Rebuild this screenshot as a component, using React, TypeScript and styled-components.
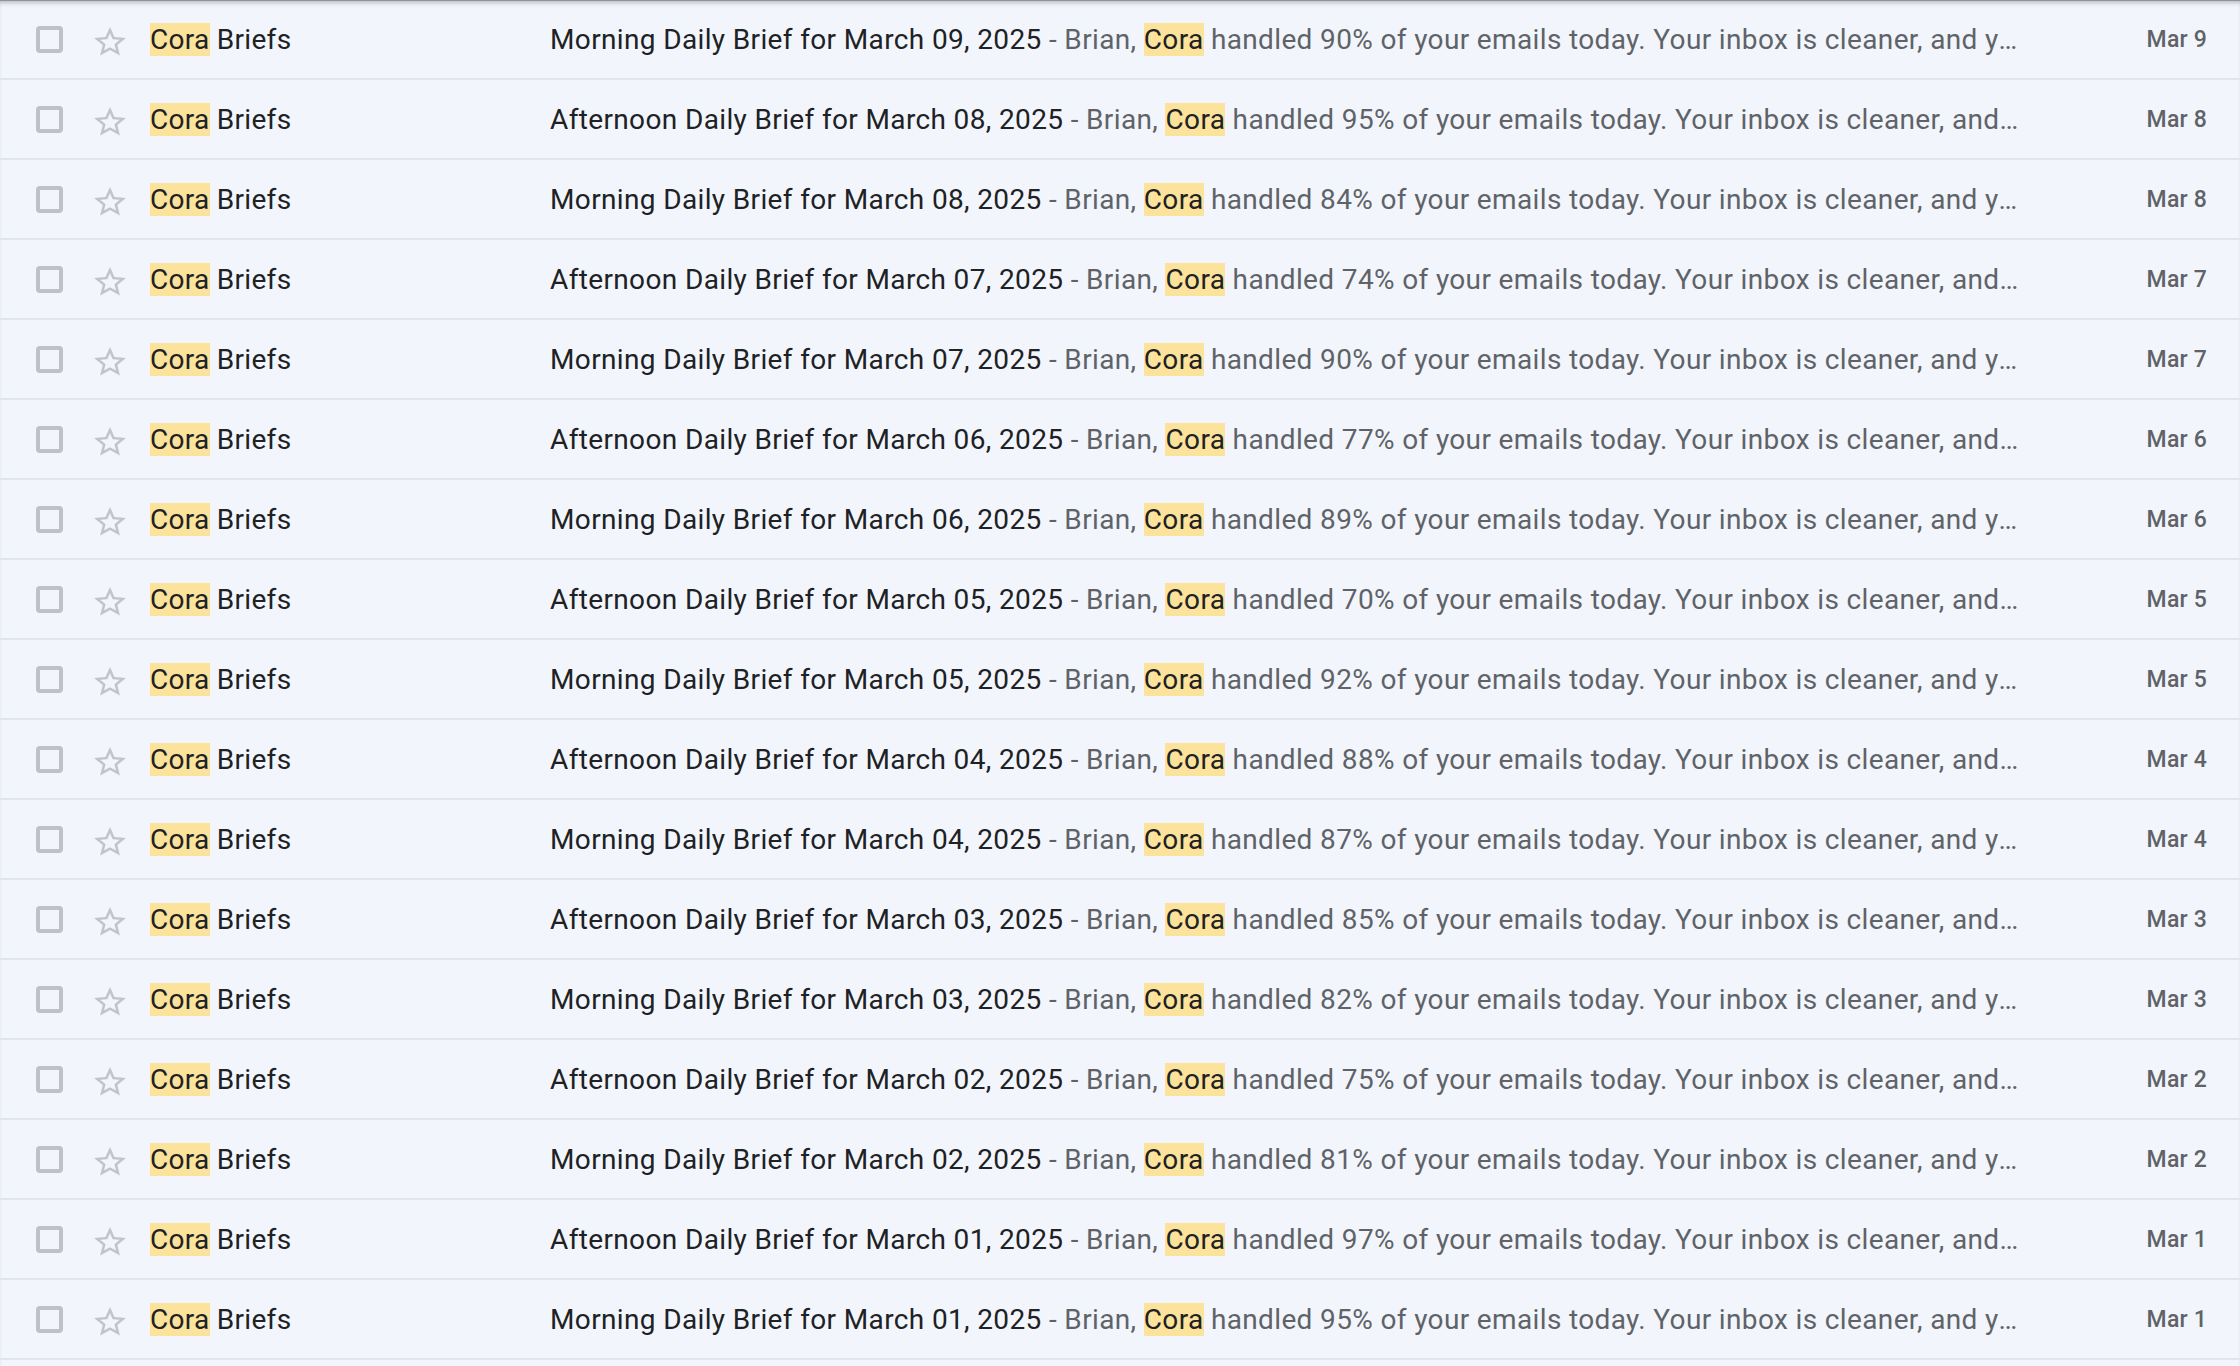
import React from "react";
import styled, { createGlobalStyle } from "styled-components";

const GlobalStyle = createGlobalStyle`
  html, body {
    margin: 0;
    padding: 0;
    background: #f2f6fc;
  }
  body {
    font-family: Roboto, "Liberation Sans", Arial, sans-serif;
    -webkit-font-smoothing: antialiased;
  }
`;

const List = styled.div`
  width: 2240px;
  min-height: 1366px;
  background: #f2f6fc;
  box-shadow: inset 0 1px 0 rgba(95, 99, 104, 0.5), inset 0 5px 4px -2px rgba(60, 64, 67, 0.3);
`;

const Row = styled.div`
  display: flex;
  align-items: center;
  height: 78px;
  border-bottom: 2px solid #e1e6ee;
  padding: 0 33px 0 36px;
  font-size: 28px;
  letter-spacing: 0.3px;
  color: #202124;
`;

const CheckBox = styled.span`
  flex: none;
  box-sizing: border-box;
  width: 27px;
  height: 27px;
  border: 4px solid #bec1c6;
  border-radius: 4px;
  margin-top: 1px;
`;

const StarIcon = styled.svg`
  flex: none;
  width: 32px;
  height: 29px;
  margin-left: 31px;
  margin-top: 5px;
  fill: #c1c4c9;
`;

const Sender = styled.div`
  flex: none;
  width: 400px;
  margin-left: 24px;
  white-space: nowrap;
  overflow: hidden;
`;

const Content = styled.div`
  flex: 1;
  min-width: 0;
  white-space: nowrap;
  overflow: hidden;
  text-overflow: ellipsis;
  letter-spacing: 0.36px;
  color: #5f6368;
`;

const Subject = styled.span`
  color: #202124;
`;

const Mark = styled.span`
  background: #fce39c;
  color: #202124;
  padding: 1px 0;
`;

const DateCell = styled.div`
  flex: none;
  width: 185px;
  text-align: right;
  font-size: 23px;
  font-weight: 500;
  letter-spacing: 0.2px;
  color: #5f6368;
`;

type Brief = { part: "Morning" | "Afternoon"; day: string; pct: number; date: string };

const briefs: Brief[] = [
  { part: "Morning", day: "09", pct: 90, date: "Mar 9" },
  { part: "Afternoon", day: "08", pct: 95, date: "Mar 8" },
  { part: "Morning", day: "08", pct: 84, date: "Mar 8" },
  { part: "Afternoon", day: "07", pct: 74, date: "Mar 7" },
  { part: "Morning", day: "07", pct: 90, date: "Mar 7" },
  { part: "Afternoon", day: "06", pct: 77, date: "Mar 6" },
  { part: "Morning", day: "06", pct: 89, date: "Mar 6" },
  { part: "Afternoon", day: "05", pct: 70, date: "Mar 5" },
  { part: "Morning", day: "05", pct: 92, date: "Mar 5" },
  { part: "Afternoon", day: "04", pct: 88, date: "Mar 4" },
  { part: "Morning", day: "04", pct: 87, date: "Mar 4" },
  { part: "Afternoon", day: "03", pct: 85, date: "Mar 3" },
  { part: "Morning", day: "03", pct: 82, date: "Mar 3" },
  { part: "Afternoon", day: "02", pct: 75, date: "Mar 2" },
  { part: "Morning", day: "02", pct: 81, date: "Mar 2" },
  { part: "Afternoon", day: "01", pct: 97, date: "Mar 1" },
  { part: "Morning", day: "01", pct: 95, date: "Mar 1" },
];

const Star = () => (
  <StarIcon viewBox="2 2 20 19.27" preserveAspectRatio="none" aria-hidden="true">
    <path d="M22 9.24l-7.19-.62L12 2 9.19 8.63 2 9.24l5.46 4.73L5.82 21 12 17.27 18.18 21l-1.63-7.03L22 9.24zM12 15.4l-3.76 2.27 1-4.28-3.32-2.88 4.38-.38L12 6.1l1.71 4.04 4.38.38-3.32 2.88 1 4.28L12 15.4z" />
  </StarIcon>
);

export default function App() {
  return (
    <>
      <GlobalStyle />
      <List>
        {briefs.map((b, i) => (
          <Row key={i}>
            <CheckBox />
            <Star />
            <Sender>
              <Mark>Cora</Mark> Briefs
            </Sender>
            <Content>
              <Subject>
                {b.part} Daily Brief for March {b.day}, 2025
              </Subject>
              {" - Brian, "}
              <Mark>Cora</Mark>
              {` handled ${b.pct}% of your emails today. Your inbox is cleaner, and your day is more focused.`}
            </Content>
            <DateCell>{b.date}</DateCell>
          </Row>
        ))}
      </List>
    </>
  );
}
